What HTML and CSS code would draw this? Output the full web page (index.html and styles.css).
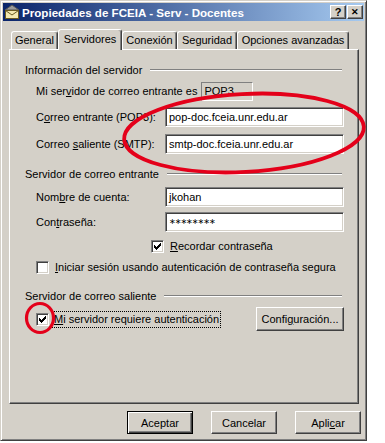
FILE: index.html
```html
<!DOCTYPE html>
<html>
<head>
    <meta charset="utf-8">
    <title>Propiedades de FCEIA - Serv - Docentes</title>
    <link rel="stylesheet" href="styles.css">
</head>
<body>
    <div class="window">
        <div class="titlebar">
            <svg class="app-icon" width="16" height="16" viewBox="0 0 16 16">
                <path d="M1 6 L8 1 L15 6 Z" fill="#9a9a9a" stroke="#555" stroke-width="1"/>
                <rect x="1.5" y="6.5" width="13" height="8" fill="#f4e9b0" stroke="#6b5a20"/>
                <path d="M1.5 6.5 L8 11 L14.5 6.5" fill="none" stroke="#6b5a20"/>
            </svg>
            <span class="title">Propiedades de FCEIA - Serv - Docentes</span>
            <span class="tb-btn help">?</span>
            <span class="tb-btn close">&#x2715;</span>
        </div>

        <div class="tabs">
            <div class="tab t-general">General</div>
            <div class="tab t-serv active">Servidores</div>
            <div class="tab t-conex">Conexión</div>
            <div class="tab t-seg">Seguridad</div>
            <div class="tab t-opc">Opciones avanzadas</div>
        </div>

        <div class="panel">
            <div class="group-head g1"><span>Información del servidor</span><i></i></div>
            <div class="row r-pop">
                <span>Mi ser<u>v</u>idor de correo entrante es</span>
                <span class="static">POP3</span>
            </div>
            <div class="row r-in">
                <label>C<u>o</u>rreo entrante (POP3):</label>
                <div class="field">pop-doc.fceia.unr.edu.ar</div>
            </div>
            <div class="row r-out">
                <label>Correo <u>s</u>aliente (SMTP):</label>
                <div class="field">smtp-doc.fceia.unr.edu.ar</div>
            </div>

            <div class="group-head g2"><span>Servidor de correo entrante</span><i></i></div>
            <div class="row r-user">
                <label>Nom<u>b</u>re de cuenta:</label>
                <div class="field">jkohan</div>
            </div>
            <div class="row r-pass">
                <label>Con<u>t</u>raseña:</label>
                <div class="field pass">∗∗∗∗∗∗∗∗</div>
            </div>
            <div class="row r-remember">
                <span class="check on"></span>
                <span><u>R</u>ecordar contraseña</span>
            </div>
            <div class="row r-spa">
                <span class="check"></span>
                <span><u>I</u>niciar sesión usando autenticación de contraseña segura</span>
            </div>

            <div class="group-head g3"><span>Servidor de correo saliente</span><i></i></div>
            <div class="row r-auth">
                <span class="check on"></span>
                <span class="focus"><u>M</u>i servidor requiere autenticación</span>
                <span class="btn cfg">Confi<u>g</u>uración...</span>
            </div>
        </div>

        <div class="footer">
            <span class="btn default">Aceptar</span>
            <span class="btn">Cancelar</span>
            <span class="btn">Apli<u>c</u>ar</span>
        </div>

        <svg class="marks" width="367" height="441" viewBox="0 0 367 441">
            <ellipse cx="244" cy="133" rx="120" ry="39" transform="rotate(-3 244 133)" fill="none" stroke="#e4001a" stroke-width="3.8"/>
            <ellipse cx="40" cy="318" rx="13.5" ry="14.5" fill="none" stroke="#e4001a" stroke-width="3.2"/>
        </svg>
    </div>
</body>
</html>
```

FILE: styles.css
```css
body {
    margin: 0;
    background: #ffffff;
    font-family: 'Liberation Sans', Arial, sans-serif;
    font-size: 11px;
    color: #000;
}

u {
    text-decoration: underline;
    text-underline-offset: 1px;
}

.window {
    position: relative;
    width: 367px;
    height: 441px;
    box-sizing: border-box;
    background: #d4d0c8;
    border: 1px solid;
    border-color: #d4d0c8 #404040 #404040 #d4d0c8;
    box-shadow: inset 1px 1px #ffffff, inset -1px -1px #808080;
    padding: 2px;
}

/* title bar */
.titlebar {
    height: 18px;
    display: flex;
    align-items: center;
    background: linear-gradient(to right, #0a246a, #a6caf0);
    padding: 0 1px 0 1px;
}

.app-icon {
    flex: none;
    margin-right: 2px;
}

.title {
    flex: 1;
    color: #fff;
    font-weight: bold;
    font-size: 11.6px;
    white-space: nowrap;
}

.tb-btn {
    width: 16px;
    height: 14px;
    box-sizing: border-box;
    background: #d4d0c8;
    border: 1px solid;
    border-color: #ffffff #404040 #404040 #ffffff;
    box-shadow: inset -1px -1px #808080;
    font-weight: bold;
    font-size: 11px;
    line-height: 12px;
    text-align: center;
}

.tb-btn.close {
    margin-left: 1px;
    font-size: 9px;
}

/* tabs */
.tabs {
    display: flex;
    align-items: flex-end;
    height: 23px;
    margin-top: 5px;
    padding-left: 8px;
}

.tab {
    height: 18px;
    box-sizing: border-box;
    border: 1px solid;
    border-bottom: none;
    border-color: #ffffff #404040 transparent #ffffff;
    box-shadow: inset -1px 0 #808080;
    border-radius: 3px 3px 0 0;
    text-align: center;
    line-height: 17px;
    white-space: nowrap;
}

.tab.active {
    height: 21px;
    margin-bottom: -1px;
    position: relative;
    z-index: 1;
    background: #d4d0c8;
    line-height: 18px;
}

.t-general { width: 47px; }
.t-serv { width: 64px; }
.t-conex { width: 55px; }
.t-seg { width: 60px; }
.t-opc { width: 112px; }

/* panel */
.panel {
    margin-left: 6px;
    width: 350px;
    height: 355px;
    box-sizing: border-box;
    border: 1px solid;
    border-color: #ffffff #404040 #404040 #ffffff;
    box-shadow: inset -1px -1px #808080;
    padding: 13px 14px 0 15px;
}

.group-head {
    display: flex;
    align-items: center;
    height: 13px;
    margin-right: 2px;
}

.group-head i {
    flex: 1;
    margin-left: 8px;
    border-top: 1px solid #808080;
    border-bottom: 1px solid #ffffff;
}

.g2 { margin-top: 13px; }
.g3 { margin-top: 12px; }

.row {
    display: flex;
    align-items: center;
    height: 20px;
    margin-left: 11px;
    white-space: nowrap;
}

.row label {
    width: 129px;
    flex: none;
}

.r-pop { margin-top: 5px; }
.r-in { margin-top: 6px; }
.r-out { margin-top: 7px; }
.r-user { margin-top: 7px; }
.r-pass { margin-top: 5px; }
.r-remember { margin-top: 4px; padding-left: 115px; }
.r-spa { margin-top: 1px; }
.r-auth { margin-top: 5px; height: 24px; }

.static {
    width: 52px;
    height: 19px;
    box-sizing: border-box;
    margin-left: 4px;
    border: 1px solid;
    border-color: #808080 #ffffff #ffffff #808080;
    padding-left: 2px;
    line-height: 17px;
}

.field {
    flex: 1;
    height: 20px;
    box-sizing: border-box;
    background: #fff;
    border: 1px solid;
    border-color: #808080 #ffffff #ffffff #808080;
    box-shadow: inset 1px 1px #404040, inset -1px -1px #d4d0c8;
    padding-left: 3px;
    line-height: 18px;
}

.field.pass {
    font-family: 'DejaVu Sans', sans-serif;
    font-size: 8px;
    letter-spacing: -1px;
}

.check {
    flex: none;
    width: 13px;
    height: 13px;
    box-sizing: border-box;
    background: #fff;
    border: 1px solid;
    border-color: #808080 #ffffff #ffffff #808080;
    box-shadow: inset 1px 1px #404040, inset -1px -1px #d4d0c8;
    margin-right: 6px;
    position: relative;
}

.check.on::after {
    content: "";
    position: absolute;
    left: 2px;
    top: 2px;
    width: 7px;
    height: 7px;
    background: url("data:image/svg+xml,%3Csvg xmlns='http://www.w3.org/2000/svg' width='7' height='7'%3E%3Cpath d='M0 2h1v1h1v1h1V3h1V2h1V1h1V0h1v3h-1v1h-1v1h-1v1h-1v1h-1V6H1V5H0z' fill='%23000'/%3E%3C/svg%3E") no-repeat;
}

.r-auth .check {
    margin-right: 4px;
}

.focus {
    outline: 1px dotted #000;
    outline-offset: 0;
    padding: 1px 1px;
    line-height: 13px;
}

.btn {
    width: 66px;
    height: 23px;
    box-sizing: border-box;
    display: flex;
    align-items: center;
    justify-content: center;
    background: #d4d0c8;
    border: 1px solid;
    border-color: #ffffff #404040 #404040 #ffffff;
    box-shadow: inset -1px -1px #808080;
}

.btn.cfg {
    width: 88px;
    height: 24px;
    margin-left: auto;
}

.btn.default {
    border: 1px solid #000;
    box-shadow: inset 1px 1px #ffffff, inset -1px -1px #404040, inset -2px -2px #808080;
}

.footer {
    display: flex;
    justify-content: flex-end;
    gap: 18px;
    margin-top: 7px;
    padding-right: 3px;
}

.marks {
    position: absolute;
    left: -1px;
    top: -1px;
    pointer-events: none;
}
```
